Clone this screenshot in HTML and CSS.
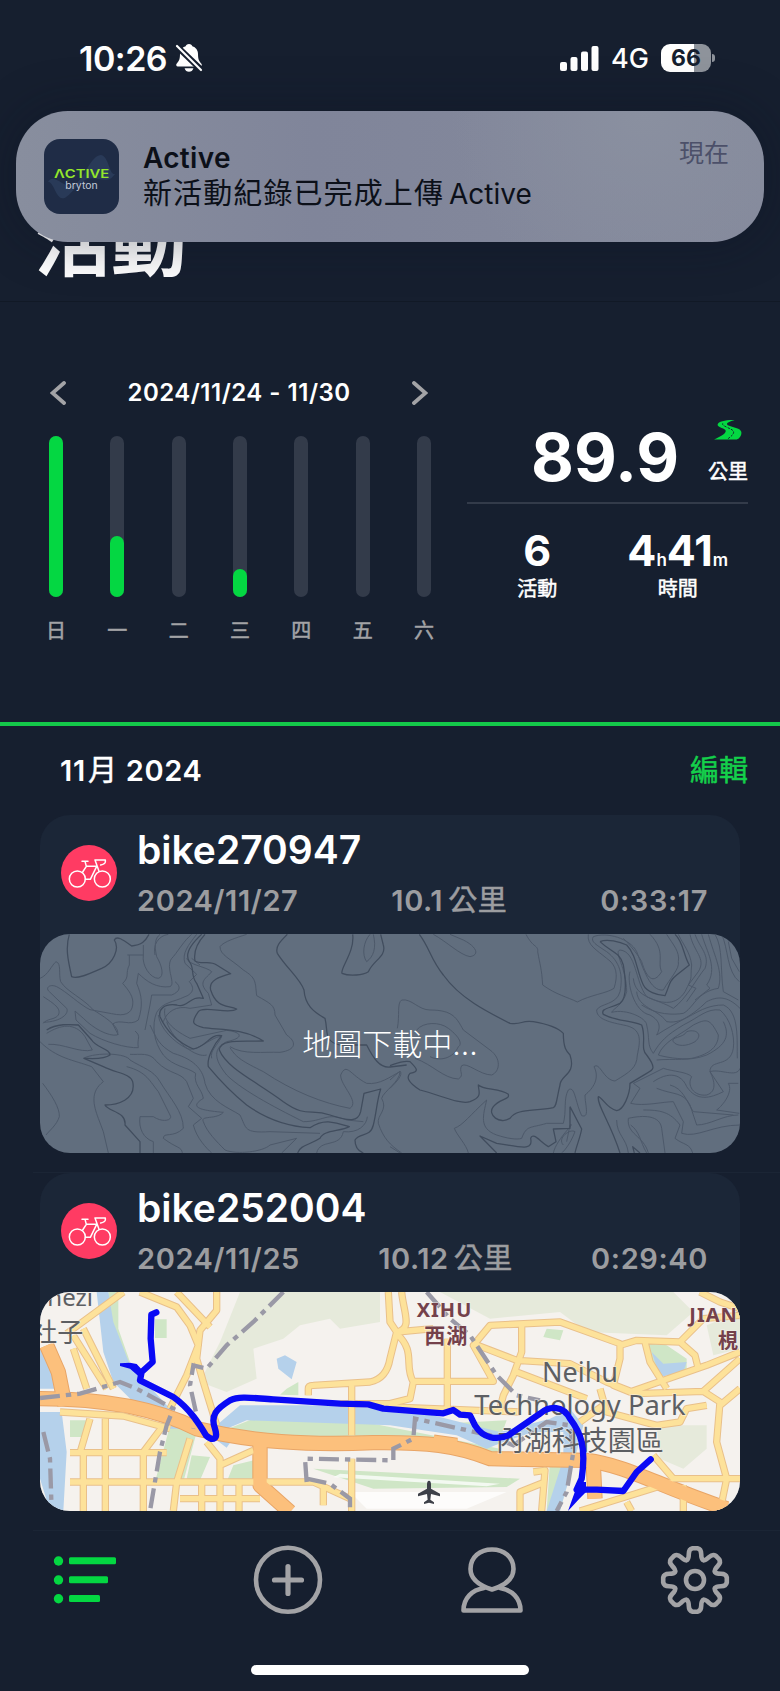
FILE: index.html
```
<!DOCTYPE html>
<html lang="zh-Hant">
<head>
	<meta charset="UTF-8">
	<title>活動</title>
	<link rel="stylesheet" href="styles.css">
</head>
<body>
	<div class="phone">
		<div class="statusbar">
			<div class="clock">
				<span>10:26</span>
				<svg class="bell" viewBox="0 0 28 30">
					<path fill="#fff" d="M14 1c1.8 0 3.2 1.200 3.300 2.300 3.500 1 5.700 4 5.700 7.700 0 6 1.500 7.500 3.400 9.700.8 1 .3 2.800-1.200 2.800H2.800C1.300 23.500.8 21.700 1.600 20.700 3.500 18.500 5 17 5 11c0-3.700 2.200-6.700 5.700-7.700C10.800 2.200 12.200 1 14 1zM9.600 25.200h8.800c-.6 2.300-2.300 3.600-4.400 3.600s-3.800-1.300-4.400-3.600z"/>
					<path stroke="#161f2f" stroke-width="6" d="M0 1.500l28 27"/>
					<path stroke="#fff" stroke-width="2.200" stroke-linecap="round" d="M2 3l24 24"/>
				</svg>
			</div>
			<div class="signal">
				<svg class="bars" viewBox="0 0 39 25" fill="#fff">
					<rect x="0" y="16" width="7" height="9" rx="2"/>
					<rect x="10.500" y="11" width="7" height="14" rx="2"/>
					<rect x="21" y="5.500" width="7" height="19.500" rx="2"/>
					<rect x="31.500" y="0" width="7" height="25" rx="2"/>
				</svg>
				<span class="net">4G</span>
				<div class="battery">66</div>
				<i class="nub"></i>
			</div>
		</div>

		<div class="header"><h1>活動</h1></div>

		<div class="stats">
			<div class="week">
				<div class="range">
					<svg viewBox="0 0 16 24"><path d="M14 2L2.500 12 14 22"/></svg>
					<span>2024/11/24 - 11/30</span>
					<svg viewBox="0 0 16 24"><path d="M2 2l11.500 10L2 22"/></svg>
				</div>
				<ul class="days">
					<li><div class="bar"><b style="height:100%"></b></div><span>日</span></li>
					<li><div class="bar"><b style="height:38%"></b></div><span>一</span></li>
					<li><div class="bar"></div><span>二</span></li>
					<li><div class="bar"><b style="height:17.400%"></b></div><span>三</span></li>
					<li><div class="bar"></div><span>四</span></li>
					<li><div class="bar"></div><span>五</span></li>
					<li><div class="bar"></div><span>六</span></li>
				</ul>
			</div>
			<div class="total">
				<div class="distance">
					<strong>89.9</strong>
					<div class="unit">
						<svg viewBox="792 87 86 61">
							<path fill="#04d742" d="M855 87C830 86 805 91 803 101C802 110 830 113 828 121C826 132 806 139 792 147H862C873 142 879 129 875 121C870 109 834 108 832 100C831 93 846 91 855 87z"/>
							<path fill="none" stroke="#161f2f" stroke-width="3" stroke-dasharray="7 4" d="M819 97C813 106 848 112 852 122C854 132 842 138 832 147"/>
						</svg>
						<span>公里</span>
					</div>
				</div>
				<div class="sums">
					<div><strong>6</strong><span>活動</span></div>
					<div><strong>4<small>h</small>41<small>m</small></strong><span>時間</span></div>
				</div>
			</div>
		</div>

		<div class="month">
			<h2>11<em>月</em> 2024</h2>
			<a href="javascript:;">編輯</a>
		</div>

		<div class="list">
			<div class="card">
				<div class="info">
					<svg class="bike" viewBox="184 434 168 168">
						<circle cx="268" cy="518" r="84" fill="#ff3b63"/>
						<g id="bike" fill="none" stroke="#fff" stroke-width="4.500" stroke-linejoin="round" stroke-linecap="round">
							<circle cx="233" cy="536" r="24"/>
							<circle cx="308" cy="536" r="24"/>
							<path d="M247 483h18M256 483l4 15-11 17M260 498h31l-19 39h-15M298 513l-12-34h31v6q-1 6-14 9"/>
						</g>
					</svg>
					<div class="text">
						<h3>bike270947</h3>
						<p><span>2024/11/27</span><span>10.1<em>公里</em></span><span>0:33:17</span></p>
					</div>
				</div>
				<div class="map loading">
					<svg viewBox="0 0 2100 657">
						<g class="contour" transform="translate(-30 -27)">
							<path d="M375 90C368 60 385 32 415 28M292 90h48V60M298 90V120C285 145 300 155 278 175C295 195 312 215 308 240C305 265 285 275 245 266L180 254C150 240 110 200 80 185C58 175 45 190 58 200L110 250C118 265 95 290 40 292M30 160C55 150 65 120 78 110C95 115 85 145 92 170C110 200 160 220 190 255C240 285 270 310 262 330C235 335 190 310 160 280L135 258L138 285L180 325C220 350 290 370 325 368C320 340 335 335 315 318"/>
							<path d="M340 90C335 120 360 160 385 160C405 155 395 120 380 95C372 60 375 40 390 28M325 145C350 170 380 190 420 185C440 175 400 120 430 95C450 70 460 50 485 28M325 145L320 175C335 210 340 240 325 285C300 305 270 280 248 297L265 330M365 210h60C450 200 455 185 435 170M365 210L360 240 345 315"/>
							<path d="M500 28C475 60 455 85 465 115L500 148 478 170C500 195 480 210 465 215C430 232 400 230 380 262C365 300 370 350 400 390C430 425 470 425 497 445C490 480 515 490 520 520C480 545 500 555 580 562C560 585 510 570 520 590C530 620 560 650 585 675C620 690 700 680 720 660L800 640 755 684"/>
							<path d="M40 215C70 235 95 250 85 270C75 285 50 280 40 295M50 325C90 300 135 290 165 335L187 375C150 385 100 355 55 358M30 350C80 400 130 405 185 425L220 470C180 500 190 540 205 580L220 620 235 684M38 475C65 510 90 550 88 575 80 600 60 615 48 630M160 400C200 380 290 385 300 405C340 430 370 435 390 470C420 520 460 560 460 610C430 640 400 620 400 640 440 670 455 665 457 684M300 388C330 390 360 380 380 410C420 450 450 440 470 470L490 520 475 545 515 580 490 600C500 640 530 670 545 684M330 575h40C400 595 430 585 420 570L385 500C360 470 350 440 290 425M330 575C325 610 340 640 370 650V684"/>
							<path d="M405 250C395 290 440 320 480 340L590 316C640 322 640 340 590 350C550 370 550 400 590 450C640 500 760 560 820 590C880 590 890 560 950 585L1000 590M410 290C430 350 500 400 530 390M360 300C380 340 385 360 430 385 500 405 520 440 525 475C540 530 600 550 630 570C650 610 640 625 720 620L870 625M600 365C640 390 700 380 750 382C800 375 800 350 770 330L735 270C735 240 720 235 680 212C675 170 680 160 640 135C600 100 570 90 570 65C580 50 620 38 650 28M600 368C620 400 640 410 700 440C790 500 880 535 960 550C990 530 930 480 932 450C950 410 960 450 1010 475C1050 480 1080 455 1110 440 1110 470 1060 500 1055 520C1075 555 1040 570 1045 595C1060 640 1080 660 1115 684M860 684C870 640 930 670 940 620C985 625 1010 600 1012 575M1020 28C1000 50 995 90 1010 110C1030 95 1040 70 1030 28"/>
							<path d="M470 100C475 120 530 125 545 140C530 160 500 170 535 205L545 240 480 250C440 240 410 260 400 290M485 100L510 120M385 270C390 310 430 350 470 370C500 385 550 330 575 335C560 365 540 375 545 400"/>
							<path class="dark" d="M118 28C105 70 115 110 125 155C145 165 190 140 215 130C250 115 270 70 253 45C260 30 280 45 305 63C335 60 345 50 357 28M525 28C500 55 490 80 495 108C515 120 540 105 560 120L602 146C570 155 535 165 542 195C560 250 590 240 620 252C600 270 520 240 505 260C480 295 490 300 520 308C570 315 640 310 700 348C640 350 570 340 568 375C590 430 680 470 760 530C830 580 840 550 900 570C960 590 985 590 992 560L1002 505 1052 492C1040 530 1040 560 1030 600C1020 640 990 620 975 645C975 670 990 680 1000 684"/>
							<path class="dark" d="M515 28C480 60 465 90 478 110C495 130 480 150 500 175L520 220C480 210 475 250 440 240C400 235 385 255 390 275C410 320 440 350 490 372C530 365 540 325 575 332C550 360 530 400 535 425C560 455 600 500 650 540C720 590 790 605 840 608C880 580 910 590 958 605C930 620 880 615 870 640C840 660 810 660 803 684M50 315C80 295 120 298 145 300L185 345C200 370 240 370 240 390C220 405 180 400 162 400L220 425C260 445 300 445 308 470C320 525 260 540 225 540C235 560 290 560 285 600L330 650V684M772 28C750 50 735 65 742 85C770 130 810 160 822 195C825 240 850 260 885 280C895 320 880 350 930 360H1010C1030 400 1050 430 1080 426L1130 420M968 28C975 80 930 130 936 145C960 155 1000 150 1015 140C1030 105 1070 95 1060 60L1052 28"/>
						</g>
						<g class="contour" transform="translate(1050 -27)">
							<path d="M130 28C170 50 210 90 240 95C270 90 260 65 220 45L180 28M22 310C30 270 20 235 35 225C65 220 85 255 120 255C190 255 200 280 220 315L300 375C335 400 330 440 305 450C270 450 230 410 215 422C205 440 225 450 205 462C160 460 130 420 75 400M80 315C100 290 150 290 175 310C215 340 215 360 205 365C190 400 150 410 120 395M408 28C430 70 445 60 443 80C450 120 455 130 458 180C500 210 530 215 562 231C600 210 650 205 672 190C685 150 680 120 650 100C620 75 590 60 595 28M0 490C20 470 40 450 30 438L0 465M0 665L30 684"/>
							<path d="M290 525C240 570 220 600 193 610C200 630 230 660 235 684M290 525C280 570 265 610 320 630C350 640 380 645 395 640C410 600 420 610 470 595H520C530 560 520 520 535 495C555 480 555 530 575 572C600 580 585 540 585 510C610 490 630 460 612 425C630 410 640 465 675 468C720 440 740 430 742 390C750 350 760 310 700 300C650 290 620 280 620 255C630 235 680 240 690 200C700 150 690 110 650 80C620 60 600 50 610 35C650 20 720 40 740 80C760 130 780 200 820 195C840 160 870 130 865 110C870 80 850 60 830 28M780 28C830 80 800 110 815 140C790 180 770 160 755 110C745 90 720 60 700 40"/>
							<path d="M690 75C670 80 710 130 710 200C700 240 670 250 665 262C710 250 770 280 770 300C780 340 770 360 790 385C810 350 830 330 880 300C930 275 950 250 990 255C1020 280 1035 330 1030 370C1020 430 960 400 960 440C975 470 980 500 950 510C910 515 890 480 905 455C890 440 850 440 820 430L730 475 750 490 722 535C760 545 820 530 850 530L880 590 875 625C920 640 970 600 1050 600M690 75C740 80 735 170 770 215C820 240 860 240 885 200C910 150 900 170 905 120C900 80 880 60 865 28"/>
							<path d="M720 140C710 170 730 260 780 270C815 290 810 310 800 330 860 290 900 280 950 230C980 215 1010 210 1050 250M740 200C745 250 800 250 830 290C890 300 920 240 1000 240C1050 260 1040 350 1042 400M730 160C735 220 800 220 850 250C890 220 920 160 945 130C960 90 930 70 915 28M755 240C800 270 850 270 880 265C910 250 920 200 985 190C1000 140 975 100 955 28M900 28C910 80 950 100 925 140L895 180 918 190 890 230M935 28C950 80 985 130 950 180L960 190 915 225M975 28C1000 70 990 130 1000 200L1045 225M995 28C1015 70 1010 140 1048 170M1015 50L1025 100 1048 140"/>
							<path d="M805 390C820 350 870 330 910 300C950 280 960 280 985 330C985 370 950 390 905 400C870 405 820 395 805 390M850 350C840 335 880 340 890 320C920 310 940 330 915 350C890 365 860 365 850 350M790 470C850 430 880 460 890 485C920 530 960 520 1000 500L960 440C990 430 1040 460 1050 430M800 490C850 510 880 500 900 540L920 600C960 600 1000 570 1045 570M840 480C880 490 890 530 910 560L1030 570M800 405C850 400 900 410 950 390C1010 360 1020 330 1000 290M1045 475H1015C1030 500 1000 540 980 555L1048 565M715 580C760 570 810 570 815 610L825 684M715 580C710 630 760 630 775 684M680 585C680 630 710 640 715 684M760 555C810 555 840 560 870 600L855 640C880 660 900 655 908 684M520 660C500 640 540 610 555 620 540 660 520 680 515 684M490 684C500 640 560 590 540 600L530 650M770 684C750 650 750 620 722 600"/>
							<path class="dark" d="M88 28C120 70 120 100 160 150C210 220 290 260 360 295C400 300 390 285 430 290C490 300 510 315 520 325C520 370 530 380 540 390C560 450 510 450 510 480C500 520 500 545 490 548C430 560 380 550 360 580C330 600 290 570 310 545C330 520 360 525 355 508C330 490 280 495 265 480C265 500 280 515 240 530C210 540 150 510 90 495C50 470 50 455 60 445C90 440 80 430 60 410C40 405 20 415 0 422M630 50C650 40 690 50 710 60C740 90 740 140 760 180C770 200 800 210 825 212C840 180 835 170 860 150L898 120C880 90 880 50 855 28M630 50C660 80 690 80 700 120C710 180 710 220 690 235C660 250 630 250 640 268C680 290 720 285 755 300C770 340 750 370 770 390C800 430 790 435 770 445L720 475C720 510 700 555 680 557C650 550 640 520 625 515C620 540 660 590 690 684M540 545L575 612C570 640 560 660 555 684M540 545V610L490 612 498 650 475 665C450 650 430 620 422 640C430 680 390 665 320 655L270 633 320 684M750 684L728 665 733 684"/>
						</g>
					</svg>
					<span>地圖下載中...</span>
				</div>
			</div>

			<div class="card">
				<div class="info">
					<svg class="bike" viewBox="184 434 168 168">
						<circle cx="268" cy="518" r="84" fill="#ff3b63"/>
						<use href="#bike"/>
					</svg>
					<div class="text">
						<h3>bike252004</h3>
						<p><span>2024/11/25</span><span>10.12<em>公里</em></span><span>0:29:40</span></p>
					</div>
				</div>
				<div class="map">
					<svg viewBox="0 0 2100 657">
						<defs>
							<g id="roads">
								<path d="M0 74H0M80 125L250 0M300 0L410 45 450 100 475 160 440 250 390 350M410 0L510 105M530 0V55L480 115 470 200 490 270 530 400M100 130L200 290M130 110L220 290M100 170L140 290M60 360L250 372 390 410M90 482H380M90 570H820L930 620M130 482V657M150 380L120 482M196 380V657M370 400L310 480V657M450 440L410 570 400 657M500 450L540 500V657M540 520L640 475M420 620H660M485 570V657M597 570V657M850 580V640"/>
								<path d="M805 310V290Q805 280 820 280L990 270Q1040 260 1050 200L1070 120 1050 90 1045 0M935 280V430M935 500V657M1070 120C1120 110 1090 60 1085 0M1070 120L1180 110M1070 125C1130 180 1090 220 1120 270L1110 320 1050 335H900M1222 140V350M1120 268H1360L1300 160 1350 100 1560 90 1740 155V200L1720 280 1770 300 2000 220 2100 180M1445 95V180L1420 250 1390 310 1380 350M1300 155L1430 205 1590 215 1700 270 1790 305 1990 298 2100 200M1430 240L1640 320M1740 160L1790 145 1920 150 1990 80 2100 70M1920 150L1965 190 1975 230M1815 150L1830 210 1880 290M1990 298L2040 330 2030 450 2060 560 2040 657M2040 340L2100 290M2000 340L1940 350 1920 390 1850 400 1700 360 1680 290M1050 345L1440 360M1480 540L1515 535 1505 657M1515 570L1440 600V657M1840 490L1900 560 2100 560M1900 570L1620 657M1930 580V657M1760 630L1775 657M1980 0L2040 30 2100 50M1620 390L1690 340"/>
							</g>
							<g id="motorway">
								<path d="M0 320C200 320 350 350 470 410C640 450 800 460 1000 452C1160 450 1250 460 1350 500L1640 505C1760 520 1850 580 2060 650"/>
								<path d="M20 160L55 240 75 340M660 450V580L750 660M1180 450L1250 460M1660 520L1665 620"/>
							</g>
						</defs>
						<rect width="2100" height="657" fill="#f5f2ee"/>
						<path fill="#e6eadb" d="M600 0H1020V90L900 110 870 80 780 100 730 140 640 170 650 260 560 300 480 270 540 150zM1200 0H1900L1960 60 1880 130 1640 120 1560 60 1350 80zM1850 400H2000V470L1930 530 1860 500zM2000 100L2100 60V170L2020 190z"/>
						<path fill="#cfe6c6" d="M205 0H235V110L270 210 240 230 200 120zM345 82H380V138H345zM90 385H140V435H90zM390 400L470 420 430 570H345zM455 490L510 495 480 565 440 560zM580 520L660 500V570H560zM540 420L640 380 1000 395 1380 470V520L1250 470 1020 440 700 436zM740 290L775 270V310L720 308zM1200 395L1400 385 1380 440zM1530 505H1600L1560 657H1520zM820 530L1440 560 1400 585 1000 590zM1815 150L1880 160 1940 200V240L1850 250zM1520 110L1570 115 1560 145 1510 135z"/>
						<path fill="#fff" fill-opacity=".75" d="M900 545L1380 575 1340 583 880 556zM930 600L1400 600 1280 650H980z"/>
						<path fill="#b5d1eb" d="M170 0H205L220 90 270 220 390 350 470 410H390L290 340 220 270 190 180zM0 170L30 200 50 290H0zM0 360H65L80 480 70 657H30L0 560zM530 400L600 340 800 340 1100 350 1380 420 1530 380 1590 350 1630 400 1610 480 1560 657H1520L1570 500V420L1480 420 1390 450 1340 470 1250 430 1050 400 620 385 560 410zM710 200L735 190 770 210 755 262 715 230zM1835 180L1870 215 1940 210 1930 240 1860 255z"/>
						<path fill="#b5d1eb" d="M530 445h45l-15 22z"/>
						<use href="#motorway" stroke="#e8a567" class="mway-case"/>
						<use href="#roads" class="road-case"/>
						<use href="#roads" class="road"/>
						<use href="#motorway" class="mway"/>
						<path class="border" d="M730 0L640 90 560 160 500 230 460 220 450 280 470 370 460 410M0 318L120 305 240 270 290 290 400 350 380 400 360 480 330 657M10 420L30 500 35 657M800 570L795 500 1060 505V470L1120 440 1125 380 1350 430 1420 460 1520 390 1590 400 1600 480 1580 600 1550 657M800 560L870 575 930 620V657M1160 0L1230 80 1290 130 1370 250 1430 310 1500 325"/>
						<g class="labels">
							<text x="22" y="42" font-size="72">hezi</text>
							<text x="-26" y="150" font-size="78">社子</text>
							<text x="1620" y="269" text-anchor="middle" font-size="81">Neihu</text>
							<text x="1620" y="369" text-anchor="middle" font-size="82">Technology Park</text>
							<text x="1619" y="476" text-anchor="middle" font-size="84">內湖科技園區</text>
							<g class="district">
								<text x="1130" y="75" font-size="60">XIHU</text>
								<text x="1153" y="154" font-size="63">西湖</text>
								<text x="1948" y="90" font-size="60">JIAN</text>
								<text x="2034" y="168" font-size="60">梘</text>
							</g>
						</g>
						<path fill="#3d4048" d="M1167 566q6 0 6 12v12l27 15v8l-27-7-2 17 11 8v5l-15-4-15 4v-5l11-8-2-17-27 7v-8l27-15v-12q0-12 6-12z"/>
						<path class="track" d="M349 61L334 68 332 140 338 210 305 240 300 265 400 315C450 350 480 400 498 430C520 450 535 440 525 410C510 370 530 350 570 325C600 310 650 320 700 322L900 335 985 337 1030 350 1210 364 1240 354 1260 368 1290 370 1305 400C1330 440 1370 445 1405 430L1500 365C1530 340 1570 340 1590 380C1620 420 1640 460 1625 560L1610 593 1670 593 1750 597 1790 540 1832 502"/>
						<path fill="#0a0af5" d="M312 240L290 216 270 212 240 214V222L270 230 295 252zM1615 570h23v30l-20 20-34 37z"/>
					</svg>
				</div>
			</div>
		</div>

		<div class="tabbar">
			<svg viewBox="0 0 70 70" fill="#04d742">
				<circle cx="8.500" cy="16" r="4.700"/><rect x="19" y="12.200" width="47" height="7" rx="1.500"/>
				<circle cx="8.500" cy="35" r="4.700"/><rect x="19" y="31.200" width="39" height="7" rx="1.500"/>
				<circle cx="8.500" cy="53.800" r="4.700"/><rect x="19" y="50" width="31" height="7" rx="1.500"/>
			</svg>
			<svg viewBox="0 0 70 70" class="line">
				<circle cx="35" cy="34.800" r="32"/>
				<path d="M35 21.500v27M21.500 35h27" stroke-width="5.200"/>
			</svg>
			<svg viewBox="0 0 70 70" class="line">
				<path d="M35 44.500C27 42 13.500 37 13.500 24C13.500 12 23 4.500 35 4.500S56.500 12 56.500 24C56.500 37 43 42 35 44.500z"/>
				<path d="M27 43C15 45 6.500 53 6.500 65.500H63.500C63.500 53 55 45 43 43"/>
			</svg>
			<svg viewBox="-35 -35 70 70" class="line">
				<g id="half">
					<path id="tooth" d="M-8.200-19.900Q-6.200-21-6.200-26T-2.500-31.800H2.500Q6.200-31 6.200-26T8.200-19.900"/>
					<use href="#tooth" transform="rotate(45)"/>
					<use href="#tooth" transform="rotate(90)"/>
					<use href="#tooth" transform="rotate(135)"/>
				</g>
				<use href="#half" transform="rotate(180)"/>
				<circle r="9"/>
			</svg>
		</div>
		<div class="home"></div>

		<!-- push notification -->
		<div class="notice">
			<svg class="appicon" viewBox="0 0 225 225">
				<rect width="225" height="225" rx="48" fill="#1f2c46"/>
				<path fill="#293a58" d="M12 128C30 100 60 150 90 140C120 120 140 50 170 48C195 50 195 110 213 105C190 140 160 110 130 120C100 130 75 180 55 178C35 175 30 130 12 128z"/>
				<text x="30" y="117" textLength="166" lengthAdjust="spacingAndGlyphs" font-size="37" font-weight="600" fill="#93e62b">ΛCTIVE</text>
				<text x="64" y="151" textLength="97" lengthAdjust="spacingAndGlyphs" font-size="31" fill="#c3cad8">bryton</text>
			</svg>
			<div class="msg">
				<b>Active</b>
				<p><span>新活動紀錄已完成上傳</span>Active</p>
			</div>
			<span class="when">現在</span>
		</div>
	</div>
</body>
</html>
```
FILE: styles.css
```
*{
	margin: 0;
	padding: 0;
	box-sizing: border-box;
}
body{
	background-color: #161f2f;
	color: #fff;
	font-family: Inter,"Noto Sans CJK TC",sans-serif;
}
svg{
	display: block;
}
ul{
	list-style: none;
}
.phone{
	position: relative;
	width: 780px;
	height: 1691px;
	overflow: hidden;
}
/* status bar */
.statusbar{
	height: 116px;
	padding: 0 65px 0 79px;
	display: flex;
	justify-content: space-between;
	align-items: center;
}
.clock,.signal{
	display: flex;
	align-items: center;
}
.clock{
	font-size: 34px;
	font-weight: 600;
	letter-spacing: -0.5px;
}
.bell{
	width: 28px;
	height: 30px;
	margin-left: 8px;
}
.bars{
	width: 39px;
	height: 25px;
}
.net{
	margin: 1px 12px 0;
	font-size: 27px;
	font-weight: 500;
}
.battery{
	width: 50px;
	height: 28px;
	border-radius: 9px;
	background: linear-gradient(90deg,#fff 66%,#8e939b 66%);
	color: #161f2f;
	font-size: 23px;
	font-weight: 700;
	line-height: 28px;
	text-align: center;
}
.nub{
	width: 3px;
	height: 8px;
	margin-left: 1px;
	border-radius: 0 3px 3px 0;
	background-color: #8e939b;
}
/* title */
.header{
	height: 186px;
	padding: 81px 0 0 35px;
	border-bottom: 1px solid #111926;
}
.header h1{
	font-size: 76px;
	line-height: 90px;
	font-weight: 700;
}
/* weekly stats */
.stats{
	height: 424px;
	border-bottom: 4px solid #14c84a;
	display: flex;
}
.week{
	width: 388px;
	margin-left: 46px;
	padding-top: 71px;
}
.range{
	height: 40px;
	padding: 0 6px 0 4px;
	display: flex;
	align-items: center;
	justify-content: space-between;
	font-size: 24px;
	font-weight: 600;
	letter-spacing: 0.5px;
}
.range span{
	margin-top: -1px;
}
.range svg{
	width: 16px;
	height: 24px;
	fill: none;
	stroke: #a3a3a6;
	stroke-width: 3.8;
	stroke-linecap: round;
}
.days{
	margin-top: 23px;
	display: flex;
	justify-content: space-between;
}
.days li{
	width: 20px;
	color: #a3a3a6;
	font-size: 20px;
	line-height: 30px;
	text-align: center;
}
.days span,.unit,.sums span,.month a,em{
	-webkit-text-stroke: 0.5px;
}
.bar{
	width: 14px;
	height: 161px;
	margin: 0 auto 19px;
	border-radius: 7px;
	background-color: #333b4a;
	display: flex;
	align-items: flex-end;
}
.bar b{
	width: 100%;
	border-radius: 7px;
	background-color: #04d742;
}
.total{
	width: 281px;
	margin-left: 33px;
	padding-top: 118px;
}
.distance{
	height: 84px;
	border-bottom: 2px solid #333b4a;
	display: flex;
	justify-content: flex-end;
}
.distance strong{
	font-size: 66px;
	line-height: 74px;
	font-weight: 700;
}
.unit{
	width: 40px;
	margin-left: 29px;
	font-size: 20px;
	line-height: 24px;
}
.unit svg{
	width: 28px;
	height: 20px;
	margin: 0 auto 20px;
}
.sums{
	margin-top: 24px;
	display: flex;
	text-align: center;
}
.sums div{
	flex: 1;
}
.sums strong{
	display: block;
	height: 44px;
	font-size: 43px;
	line-height: 44px;
	font-weight: 700;
}
.sums small{
	font-size: 17px;
	font-weight: 600;
	line-height: 1;
}
.sums span{
	display: block;
	margin-top: 5px;
	font-size: 20px;
	line-height: 24px;
}
/* month */
.month{
	height: 89px;
	padding: 0 32px 0 60px;
	display: flex;
	justify-content: space-between;
	line-height: 90px;
	font-size: 29px;
}
.month h2{
	font-size: 29px;
	font-weight: 600;
	letter-spacing: 0.7px;
}
em{
	font-style: normal;
	font-weight: 400;
}
.month em{
	margin-left: 2px;
}
.month a{
	color: #14d04b;
	text-decoration: none;
}
/* activities */
.list{
	margin-left: 33px;
}
.card{
	height: 358px;
	padding: 0 40px 19px 7px;
	border-bottom: 1px solid #1b2535;
}
.info{
	height: 155px;
	margin-bottom: -36px;
	padding: 11px 32px 0 21px;
	border-radius: 30px 30px 0 0;
	background-color: #1b2637;
	display: flex;
}
.bike{
	width: 56px;
	height: 56px;
	margin-top: 19px;
}
.text{
	flex: 1;
	margin-left: 20px;
}
.text h3{
	font-size: 39px;
	line-height: 48px;
	font-weight: 600;
}
.text p{
	margin-top: 9px;
	display: flex;
	justify-content: space-between;
	color: #9c9da0;
	font-size: 29px;
	line-height: 36px;
	font-weight: 600;
	letter-spacing: 0.6px;
}
.text em{
	margin-left: 5px;
}
.map{
	position: relative;
	height: 219px;
	border-radius: 30px;
	overflow: hidden;
	background-color: #616e7e;
}
.map svg{
	width: 700px;
	height: 219px;
}
.loading span{
	position: absolute;
	top: 0;
	left: 0;
	width: 100%;
	line-height: 220px;
	text-align: center;
	font-size: 30px;
	font-weight: 300;
}
.contour path{
	fill: none;
	stroke: #4d596a;
	stroke-width: 3;
	stroke-linejoin: round;
}
.contour .dark{
	stroke: #414d5e;
	stroke-width: 3.8;
}
.road,.road-case,.mway,.mway-case{
	fill: none;
	stroke-linejoin: round;
}
.road-case{
	stroke: #e9c08a;
	stroke-width: 22;
}
.road{
	stroke: #fde29a;
	stroke-width: 16;
}
.mway-case{
	stroke-width: 46;
}
.mway{
	stroke: #fcc07c;
	stroke-width: 40;
}
.border{
	fill: none;
	stroke: #9a99a6;
	stroke-width: 13;
	stroke-dasharray: 60 18 16 18;
}
.labels{
	fill: #5d5f63;
	stroke: #f5f2ee;
	stroke-width: 5;
	stroke-opacity: .6;
	paint-order: stroke;
	font-family: "Noto Sans","Noto Sans CJK TC",sans-serif;
}
.district{
	fill: #74414b;
	font-weight: 700;
	letter-spacing: 3px;
}
.track{
	fill: none;
	stroke: #0a0af5;
	stroke-width: 19;
	stroke-linecap: round;
	stroke-linejoin: round;
}
/* tab bar */
.tabbar{
	margin: 14px 50px 0;
	display: flex;
	justify-content: space-between;
}
.tabbar svg{
	width: 70px;
	height: 70px;
}
.tabbar .line{
	fill: none;
	stroke: #a3a3a6;
	stroke-width: 4.6;
	stroke-linecap: round;
	stroke-linejoin: round;
}
.home{
	width: 278px;
	height: 10px;
	margin: 50px auto 0;
	border-radius: 5px;
	background-color: #fff;
}
/* notification */
.notice{
	position: absolute;
	top: 111px;
	left: 16px;
	width: 748px;
	height: 131px;
	padding: 28px 35px 0 28px;
	border-radius: 52px;
	background: radial-gradient(circle at 84% 0,#8a90a0 0,rgba(138,144,160,0) 30%),linear-gradient(90deg,#888e9e,#80859a 40%,#858a9c);
	box-shadow: 0 0 50px rgba(12,18,34,.4);
	color: #0c1019;
	display: flex;
}
.appicon{
	width: 75px;
	height: 75px;
}
.msg{
	flex: 1;
	margin-left: 24px;
	padding-top: 1px;
	font-size: 28px;
	line-height: 36px;
}
.msg b{
	display: block;
	font-weight: 600;
	letter-spacing: 0.3px;
}
.msg p{
	white-space: nowrap;
}
.msg span{
	margin-right: 5px;
	font-size: 29px;
	letter-spacing: 1.1px;
}
.when{
	color: #4c5069;
	font-size: 25px;
	line-height: 29px;
}
```
